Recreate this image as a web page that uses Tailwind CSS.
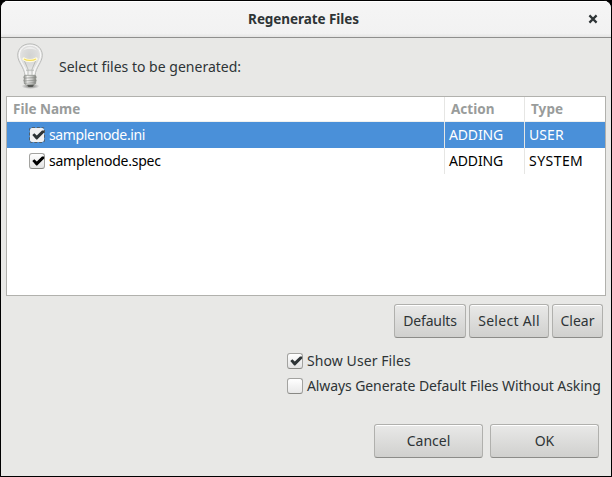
<!DOCTYPE html>
<html lang="en">
<head>
<meta charset="utf-8">
<title>Regenerate Files</title>
<script src="https://cdn.jsdelivr.net/npm/@tailwindcss/browser@4"></script>
</head>
<body class="bg-black">
<svg class="hidden">
  <symbol id="check" viewBox="0 0 16 16"><path d="M3.300 8 5.300 6.300 7.800 8.500 13 3.500h2.200v2L8.200 12.500H7.200Z" fill="currentColor"/></symbol>
</svg>
<div class="w-[612px] h-[477px] border border-black rounded-t-[8px] overflow-hidden bg-[#e8e8e6] flex flex-col font-['Noto_Sans','Open_Sans',sans-serif] text-[14px] leading-[18px] text-[#2e3436] whitespace-nowrap">
  <header class="h-[37px] shrink-0 bg-linear-to-b from-[#f5f5f5] from-0% via-[#f2f2f2] via-90% to-[#e4e4e3] border-b border-[#8f8f8d] shadow-[inset_0_1px_#fff] grid grid-cols-[1fr_auto_1fr] items-center">
    <span></span>
    <h1 class="text-[13.5px] font-bold tracking-[-0.07px] pr-[5px]">Regenerate Files</h1>
    <button class="justify-self-end mr-[13px]" aria-label="Close"><svg class="size-[10px] block" viewBox="0 0 10 10"><path d="m1.400 1.400 7.200 7.200m0-7.200L1.400 8.600" stroke="#2e3436" stroke-width="2.200"/></svg></button>
  </header>
  <main class="flex flex-col px-[5px]">
    <div class="h-[58px] flex items-center">
      <svg class="w-[30px] h-[47px] ml-[9px] mb-[4px] shrink-0" viewBox="0 0 30 50" preserveAspectRatio="none">
        <defs>
          <radialGradient id="glass" cx="50%" cy="38%" r="60%"><stop offset="0" stop-color="#d2d3d2"/><stop offset=".55" stop-color="#dededd"/><stop offset="1" stop-color="#f5f5f4"/></radialGradient>
          <linearGradient id="cap"><stop offset="0" stop-color="#858783"/><stop offset=".3" stop-color="#f2f2f0"/><stop offset=".65" stop-color="#c4c5c2"/><stop offset="1" stop-color="#777974"/></linearGradient>
          <radialGradient id="shade"><stop offset="0" stop-color="#333" stop-opacity=".7"/><stop offset="1" stop-color="#444" stop-opacity="0"/></radialGradient>
        </defs>
        <ellipse cx="15.500" cy="47" rx="9" ry="3" fill="url(#shade)"/>
        <path d="M15 2C7.500 2 2.700 7.300 2.700 14c0 7.600 6.300 12.500 7.300 21.500h10C21 26.500 27.300 21.600 27.300 14 27.300 7.300 22.500 2 15 2Z" fill="url(#glass)" stroke="#b9bab8"/>
        <path d="M15 3.500C8.500 3.500 4.400 8 4.400 14c0 7 6.100 11.500 7.100 20.500M15 3.500C21.500 3.500 25.600 8 25.600 14c0 7-6.100 11.500-7.100 20.500" fill="none" stroke="#fff" stroke-opacity=".8"/>
        <path d="M8 9c3-5 11-5 14 0-4-2-10-2-14 0Z" fill="#fff" fill-opacity=".5"/>
        <path d="M9 19 13 29v6m8-16L17 29v6M11 30h8" fill="none" stroke="#aeb0ad" stroke-width=".8"/>
        <path d="M9 18c3 2.300 9 2.300 12 0" fill="none" stroke="#fffbe0" stroke-width="3.400" stroke-linecap="round"/>
        <path d="M9 18c3 2.100 9 2.100 12 0" fill="none" stroke="#f3dc5e" stroke-width="1.400"/>
        <path d="M9.500 35.500h11l.8 2-.6 1.700.6 1.800-.6 1.800.3 1-2.500 2h-7l-2.500-2 .3-1-.6-1.800.6-1.800-.6-1.700Z" fill="url(#cap)" stroke="#92948f" stroke-width=".7"/>
        <path d="m9 38.500 12-.8M9 41.500l12-.8M9.500 44l11-.8" stroke="#8b8d88" stroke-width=".7"/>
        <path d="M12 45.500h7L17.500 48h-4Z" fill="#555753"/>
      </svg>
      <p class="ml-[14px] tracking-[0.01px]">Select files to be generated:</p>
    </div>
    <section class="h-[200px] w-[600px] border border-[#b1b1ad] bg-white text-black">
      <div class="grid grid-cols-[438px_80px_80px] h-[25px] items-center font-bold text-[13.5px] text-[#999c9b] border-b border-[#f0f0ee]">
        <span class="pl-[6px] h-full flex items-center border-r border-[#e6e6e4]">File Name</span>
        <span class="pl-[6px] h-full flex items-center border-r border-[#e6e6e4]">Action</span>
        <span class="pl-[6px] tracking-[0.1px]">Type</span>
      </div>
      <div class="grid grid-cols-[438px_80px_80px] h-[26px] bg-[#4a90d9] text-white">
        <span class="pl-[22px] h-full flex items-center border-r border-[#e6e6e4]"><i class="size-[16px] mr-[4px] rounded-[3px] border border-dashed border-[#53606b] bg-[#f1f1f1] bg-clip-padding text-[#2e3436]"><svg class="size-[16px] -m-px"><use href="#check"/></svg></i><b class="font-normal tracking-[-0.35px]">samplenode.ini</b></span>
        <span class="pl-[4px] h-full flex items-center border-r border-[#e6e6e4]"><b class="font-normal tracking-[-0.15px]">ADDING</b></span>
        <span class="pl-[4px] flex items-center"><b class="font-normal tracking-[0.1px]">USER</b></span>
      </div>
      <div class="grid grid-cols-[438px_80px_80px] h-[26px]">
        <span class="pl-[22px] h-full flex items-center border-r border-[#e6e6e4]"><i class="size-[16px] mr-[4px] rounded-[3px] border border-[#a3a3a0] border-b-[#888884] bg-linear-to-b from-white to-[#e3e3e3] text-black"><svg class="size-[16px] -m-px"><use href="#check"/></svg></i><b class="font-normal tracking-[-0.22px]">samplenode.spec</b></span>
        <span class="pl-[4px] h-full flex items-center border-r border-[#e6e6e4]"><b class="font-normal tracking-[-0.15px]">ADDING</b></span>
        <span class="pl-[4px] flex items-center"><b class="font-normal tracking-[0.45px]">SYSTEM</b></span>
      </div>
    </section>
    <div class="flex justify-end gap-[3px] mt-[8px] pr-[3px]">
      <button class="w-[72px] h-[34px] rounded-[3px] border border-[#b0b0ad] border-b-[#8c8c89] bg-linear-to-b from-[#e9e9e8] to-[#d0d0ce] shadow-[inset_0_1px_#fff] tracking-[-0.15px]">Defaults</button>
      <button class="w-[80px] h-[34px] rounded-[3px] border border-[#b0b0ad] border-b-[#8c8c89] bg-linear-to-b from-[#e9e9e8] to-[#d0d0ce] shadow-[inset_0_1px_#fff] tracking-[0.3px]">Select All</button>
      <button class="w-[51px] h-[34px] rounded-[3px] border border-[#b0b0ad] border-b-[#8c8c89] bg-linear-to-b from-[#e9e9e8] to-[#d0d0ce] shadow-[inset_0_1px_#fff]">Clear</button>
    </div>
    <div class="ml-[281px] mt-[10px] flex flex-col">
      <label class="h-[25px] flex items-center"><i class="size-[16px] mr-[4px] shrink-0 rounded-[3px] border border-[#a3a3a0] border-b-[#888884] bg-linear-to-b from-white to-[#e3e3e3]"><svg class="size-[16px] -m-px"><use href="#check"/></svg></i><b class="font-normal tracking-[0.08px]">Show User Files</b></label>
      <label class="h-[25px] flex items-center"><i class="size-[16px] mr-[4px] shrink-0 rounded-[3px] border border-[#a3a3a0] border-b-[#888884] bg-linear-to-b from-white to-[#e8e8e8]"></i><b class="font-normal tracking-[-0.1px]">Always Generate Default Files Without Asking</b></label>
    </div>
    <div class="flex justify-end gap-[7px] mt-[26px] pr-[7px]">
      <button class="w-[109px] h-[34px] rounded-[3px] border border-[#b0b0ad] border-b-[#8c8c89] bg-linear-to-b from-[#e9e9e8] to-[#d0d0ce] shadow-[inset_0_1px_#fff]">Cancel</button>
      <button class="w-[109px] h-[34px] rounded-[3px] border border-[#b0b0ad] border-b-[#8c8c89] bg-linear-to-b from-[#e9e9e8] to-[#d0d0ce] shadow-[inset_0_1px_#fff]">OK</button>
    </div>
  </main>
</div>
</body>
</html>
